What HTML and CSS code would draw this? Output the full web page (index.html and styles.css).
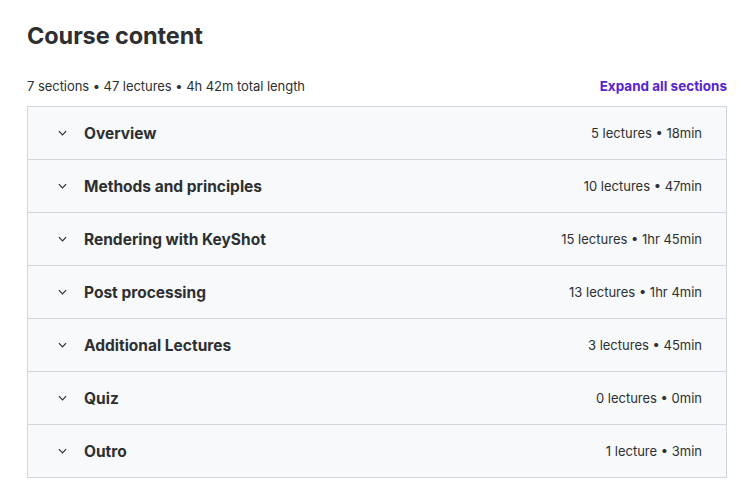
FILE: index.html
```html
<!DOCTYPE html>
<html>
<head>
<meta charset="utf-8">
<link rel="stylesheet" href="styles.css">
</head>
<body>
<div class="page">
  <h2 class="title">Course content</h2>
  <div class="summary">
    <span>7 sections • 47 lectures • 4h 42m total length</span>
    <span class="expand">Expand all sections</span>
  </div>
  <div class="sections">
    <div class="row"><span class="left"><svg class="chev" viewBox="0 0 10 6"><path d="M1 1l4 4 4-4"/></svg><span class="name">Overview</span></span><span class="meta">5 lectures • 18min</span></div>
    <div class="row"><span class="left"><svg class="chev" viewBox="0 0 10 6"><path d="M1 1l4 4 4-4"/></svg><span class="name">Methods and principles</span></span><span class="meta">10 lectures • 47min</span></div>
    <div class="row"><span class="left"><svg class="chev" viewBox="0 0 10 6"><path d="M1 1l4 4 4-4"/></svg><span class="name">Rendering with KeyShot</span></span><span class="meta">15 lectures • 1hr 45min</span></div>
    <div class="row"><span class="left"><svg class="chev" viewBox="0 0 10 6"><path d="M1 1l4 4 4-4"/></svg><span class="name">Post processing</span></span><span class="meta">13 lectures • 1hr 4min</span></div>
    <div class="row"><span class="left"><svg class="chev" viewBox="0 0 10 6"><path d="M1 1l4 4 4-4"/></svg><span class="name">Additional Lectures</span></span><span class="meta">3 lectures • 45min</span></div>
    <div class="row"><span class="left"><svg class="chev" viewBox="0 0 10 6"><path d="M1 1l4 4 4-4"/></svg><span class="name">Quiz</span></span><span class="meta">0 lectures • 0min</span></div>
    <div class="row"><span class="left"><svg class="chev" viewBox="0 0 10 6"><path d="M1 1l4 4 4-4"/></svg><span class="name">Outro</span></span><span class="meta">1 lecture • 3min</span></div>
  </div>
</div>
</body>
</html>
```

FILE: styles.css
```css
html, body {
  margin: 0;
  padding: 0;
  background: #ffffff;
}
body {
  font-family: Inter, "Liberation Sans", sans-serif;
  color: #2d2f31;
}
.page {
  padding: 20px 19px 0 27px;
}
.title {
  margin: 0;
  font-size: 23.5px;
  line-height: 32px;
  font-weight: 700;
  letter-spacing: -0.1px;
  color: #2d2f31;
}
.summary {
  display: flex;
  justify-content: space-between;
  align-items: center;
  margin-top: 24px;
  height: 20px;
  font-size: 13px;
  letter-spacing: -0.05px;
  color: #2d2f31;
}
.expand {
  color: #5624d0;
  font-weight: 700;
  font-size: 13.5px;
  letter-spacing: 0;
}
.sections {
  margin-top: 10px;
  border: 1px solid #d1d7dc;
  border-bottom: none;
  width: 698px;
}
.row {
  display: flex;
  justify-content: space-between;
  align-items: center;
  height: 52px;
  border-bottom: 1px solid #d1d7dc;
  background: #f7f9fa;
  padding: 0 24px 0 30px;
}
.left {
  display: flex;
  align-items: center;
}
.chev {
  width: 9px;
  height: 6px;
  fill: none;
  stroke: #2d2f31;
  stroke-width: 1.3;
  margin-right: 17px;
}
.name {
  font-size: 15.5px;
  font-weight: 700;
  color: #2d2f31;
}
.meta {
  font-size: 13px;
  color: #2d2f31;
}
```
